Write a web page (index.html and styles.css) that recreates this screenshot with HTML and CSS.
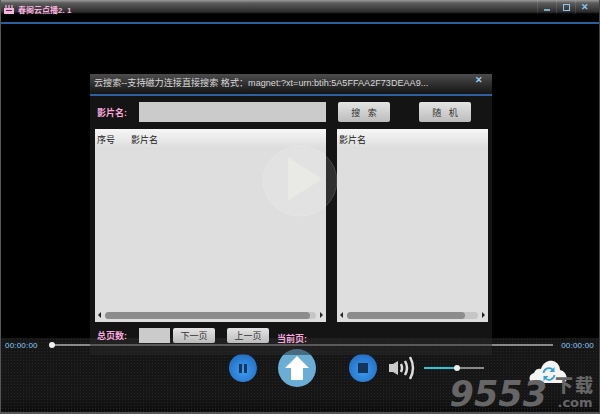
FILE: index.html
```html
<!DOCTYPE html>
<html lang="zh">
<head>
  <meta charset="utf-8">
  <title>春阁云点播2.1</title>
  <link rel="stylesheet" href="styles.css">
</head>
<body>
  <div id="player">
    <div class="titlebar">
      <svg class="logo" width="10" height="9" viewBox="0 0 10 9"><path d="M0 3h10v6H0z" fill="#f6b6e0"/><path d="M2 0v3M5 0v3M8 0v3" stroke="#f6b6e0" stroke-width="1.200"/><path d="M2 5.500h6" stroke="#40303a"/></svg>
      <span class="app-name">春阁云点播2. 1</span>
      <div class="win-btns">
        <span class="win-btn"><i class="min"></i></span>
        <span class="win-btn"><i class="max"></i></span>
        <span class="win-btn close">✕</span>
      </div>
    </div>
    <div class="video"></div>

    <div class="bottom">
      <div class="progress">
        <span class="time">00:00:00</span>
        <div class="track"><i class="thumb"></i></div>
        <span class="time">00:00:00</span>
      </div>
      <div class="controls">
        <span class="round pause"><i></i><i></i></span>
        <span class="upload">
          <svg width="24" height="26" viewBox="0 0 24 26"><path d="M12 1L24 13H18V25H6V13H0z" fill="#fff"/></svg>
        </span>
        <span class="round stop"><i></i></span>
        <svg class="speaker" width="28" height="26" viewBox="0 0 28 26">
          <path d="M0 9h4l5-3v14l-5-3H0z" fill="#ccc"/>
          <path d="M12 9q2 4 0 8M16 6q4 7 0 14M21 2q6 11 0 22" fill="none" stroke="#ddd" stroke-width="2.500"/>
        </svg>
        <div class="volume"><i class="vol-fill"></i><i class="thumb"></i></div>
        <svg class="cloud" width="40" height="26" viewBox="0 0 40 26">
          <path d="M5 23C-1 23-1 14 5 13 6 9 10 8 12 9 14 2 20 0 24 1 29 2 31 7 31 10 38 11 41 23 33 23z" fill="#f4f4f4"/>
          <path d="M14.500 13a5.500 5.500 0 0 1 9.500-3M25.500 15a5.500 5.500 0 0 1-9.500 3" fill="none" stroke="#3a9fd0" stroke-width="1.800"/>
          <path d="M25.500 7v5h-5zM14.500 21v-5h5z" fill="#3a9fd0"/>
        </svg>
      </div>
      <div class="mark"><span class="digits">9553</span><span class="mark-side"><b>下载</b><b>.com</b></span></div>
    </div>

    <div class="dialog">
      <div class="dlg-title">
        <span>云搜索--支持磁力连接直接搜索 格式：magnet:?xt=urn:btih:5A5FFAA2F73DEAA9...</span>
        <span class="dlg-close">✕</span>
      </div>
      <div class="search-row">
        <label class="pink name-label">影片名:</label>
        <div class="field name-field"></div>
        <button class="btn search-btn">搜&nbsp;&nbsp;&nbsp;索</button>
        <button class="btn random-btn">随&nbsp;&nbsp;&nbsp;机</button>
      </div>
      <div class="lists">
        <div class="list left">
          <div class="list-head"><span class="col-no">序号</span><span>影片名</span></div>
          <div class="list-body"></div>
          <div class="scroll"><i class="arrow-l"></i><div class="rail"><i class="bar"></i></div><i class="arrow-r"></i></div>
        </div>
        <div class="list right">
          <div class="list-head"><span>影片名</span></div>
          <div class="list-body"></div>
          <div class="scroll"><i class="arrow-l"></i><div class="rail"><i class="bar"></i></div><i class="arrow-r"></i></div>
        </div>
      </div>
      <div class="pager">
        <label class="pink name-label">总页数:</label>
        <div class="field page-field"></div>
        <button class="btn page-btn">下一页</button>
        <button class="btn page-btn prev">上一页</button>
        <label class="pink current">当前页:</label>
      </div>
    </div>

    <div class="play-mark"><svg width="76" height="72" viewBox="0 0 76 72"><ellipse cx="38" cy="36" rx="37" ry="35" fill="rgba(255,255,255,.12)" stroke="rgba(255,255,255,.15)"/><path d="M26 12L60 34 26 56z" fill="rgba(248,250,240,.3)"/></svg></div>
  </div>
</body>
</html>
```
FILE: styles.css
```css
* {
  box-sizing: border-box;
}

body {
  margin: 0;
  background-color: #000;
  font-family: "Liberation Sans", "Noto Sans CJK SC", sans-serif;
  font-size: 9px;
  color: #ddd;
}

#player {
  position: relative;
  width: 600px;
  height: 414px;
  overflow: hidden;
  display: flex;
  flex-direction: column;
  border-left: 1px solid #555;
  border-right: 1px solid #444;
  border-bottom: 2px solid #555;
  background-color: #000;
}

.titlebar {
  height: 25px;
  flex: none;
  display: flex;
  align-items: flex-start;
  padding: 5px 0 0 3px;
  background: linear-gradient(#9a9a9a 0, #5c5c5c 3px, #2c2c2c 12px, #000 14px, #000 22px, #2c5f9e 22px, #2c5f9e 24px, #000 24px);
}

.logo {
  margin-right: 4px;
}

.app-name {
  font-size: 8px;
  line-height: 11px;
  font-weight: bold;
  color: #f6b0de;
}

.win-btns {
  margin-left: auto;
  margin-top: -5px;
  margin-right: 5px;
  display: flex;
}

.win-btn {
  width: 19px;
  height: 14px;
  display: flex;
  align-items: center;
  justify-content: center;
  border-left: 1px solid rgba(255, 255, 255, .1);
  color: #8fc4ee;
  font-size: 9px;
  font-weight: bold;
}

.win-btn .min {
  width: 6px;
  height: 2px;
  margin-top: 6px;
  background-color: #7fa6c6;
}

.win-btn .max {
  width: 7px;
  height: 7px;
  border: 1px solid #8fc4ee;
}

.video {
  flex: 1;
}

.bottom {
  position: relative;
  height: 74px;
  flex: none;
  background-color: #161616;
  background-image: radial-gradient(#262626 1px, transparent 1px), linear-gradient(#161616 80%, #0c0c0c);
  background-size: 3px 3px, 100% 100%;
}

.progress {
  display: flex;
  align-items: center;
  height: 14px;
  padding: 0 4px;
}

.time {
  width: 34px;
  padding-top: 1px;
  font-size: 8px;
  letter-spacing: .2px;
  color: #8accff;
  white-space: nowrap;
}

.track {
  position: relative;
  width: 504px;
  height: 2px;
  margin: 0 8px 0 13px;
  background-color: #8a8a8a;
}

.thumb {
  position: absolute;
  top: -2px;
  left: -3px;
  width: 6px;
  height: 6px;
  border-radius: 50%;
  background-color: #eee;
}

.controls {
  display: flex;
  align-items: center;
  padding: 0 0 0 228px;
  height: 32px;
}

.round {
  width: 28px;
  height: 28px;
  display: flex;
  align-items: center;
  justify-content: center;
  gap: 2px;
  border-radius: 50%;
  background: radial-gradient(circle at 50% 60%, #3c9cf0, #1b62b8);
}

.round i {
  width: 3px;
  height: 9px;
  background-color: #16355c;
}

.stop i {
  width: 10px;
  height: 10px;
}

.upload {
  width: 38px;
  height: 38px;
  flex: none;
  margin: 0 33px 0 21px;
  display: flex;
  align-items: center;
  justify-content: center;
  border-radius: 50%;
  background-color: #6aaed6;
}

.speaker {
  margin-left: 12px;
}

.volume {
  position: relative;
  width: 60px;
  height: 2px;
  margin-left: 7px;
  background-color: #888;
}

.vol-fill {
  display: block;
  width: 33px;
  height: 2px;
  background-color: #2fc4d4;
}

.volume .thumb {
  left: 30px;
}

.cloud {
  margin-left: 45px;
  margin-top: 10px;
}

.mark {
  position: absolute;
  right: 4px;
  bottom: 3px;
  display: flex;
  align-items: flex-end;
  gap: 8px;
  color: #666;
  font-family: "DejaVu Sans", "Noto Sans CJK SC", sans-serif;
  font-weight: bold;
}

.digits {
  font-size: 35px;
  line-height: 30px;
  font-style: italic;
}

.mark-side {
  display: flex;
  flex-direction: column;
  align-items: center;
}

.mark-side b {
  font-size: 18px;
  line-height: 20px;
  letter-spacing: 2px;
}

.mark-side b + b {
  font-size: 13px;
  line-height: 13px;
  letter-spacing: 0;
}

.dialog {
  position: absolute;
  left: 89px;
  top: 74px;
  width: 402px;
  height: 281px;
  background-color: rgba(40, 40, 40, .5);
}

.dlg-title {
  height: 23px;
  display: flex;
  justify-content: space-between;
  padding: 2px 9px 0 4px;
  font-size: 9.100px;
  line-height: 14px;
  color: #d8d8d8;
  white-space: nowrap;
  background: linear-gradient(#4c4c4c 0, #2a2a2a 12px, #141414 20px, #2c5f9e 20px, #2c5f9e 22px, transparent 22px);
}

.dlg-close {
  margin-top: -3px;
  font-size: 9px;
  font-weight: bold;
  color: #9fcdf0;
}

.search-row {
  display: flex;
  align-items: center;
  height: 20px;
  margin-top: 5px;
  padding-left: 7px;
}

.pink {
  font-size: 9px;
  font-weight: bold;
  color: #f6a8dc;
}

.name-label {
  width: 42px;
  flex: none;
}

.field {
  height: 20px;
  background-color: #cbcbcb;
}

.name-field {
  width: 187px;
  margin-right: 12px;
}

.btn {
  height: 20px;
  padding: 0;
  border: none;
  border-radius: 2px;
  font-family: inherit;
  font-size: 9px;
  color: #333;
  background: linear-gradient(#e4e4e4, #bcbcbc);
}

.search-btn {
  width: 52px;
  margin-right: 29px;
}

.random-btn {
  width: 52px;
}

.lists {
  display: flex;
  gap: 11px;
  margin-top: 7px;
  padding-left: 5px;
}

.list {
  height: 193px;
  display: flex;
  flex-direction: column;
  background-color: #dedede;
}

.left {
  width: 231px;
}

.right {
  width: 151px;
}

.list-head {
  height: 20px;
  display: flex;
  align-items: center;
  padding-left: 2px;
  font-size: 9px;
  color: #222;
  background: linear-gradient(#f6f6f6, #dcdcdc);
}

.col-no {
  width: 34px;
}

.list-body {
  flex: 1;
}

.scroll {
  height: 10px;
  margin-bottom: 2px;
  display: flex;
  align-items: center;
  padding: 0 3px;
  gap: 4px;
}

.rail {
  flex: 1;
  height: 7px;
  border-radius: 4px;
  background-color: #c6c6c6;
}

.bar {
  display: block;
  height: 7px;
  border-radius: 4px;
  background-color: #8c8c8c;
}

.left .bar {
  width: 97%;
}

.right .bar {
  width: 90%;
}

.arrow-l {
  border: 3px solid transparent;
  border-left: none;
  border-right: 3px solid #222;
}

.arrow-r {
  border: 3px solid transparent;
  border-right: none;
  border-left: 3px solid #222;
}

.pager {
  display: flex;
  align-items: center;
  height: 15px;
  margin-top: 6px;
  padding-left: 7px;
}

.page-field {
  width: 31px;
  height: 15px;
  margin-right: 3px;
}

.page-btn {
  width: 42px;
  height: 15px;
}

.prev {
  margin-left: 12px;
}

.current {
  margin-left: 8px;
  padding-top: 6px;
}

.play-mark {
  position: absolute;
  left: 261px;
  top: 145px;
  width: 76px;
  height: 72px;
}
```
